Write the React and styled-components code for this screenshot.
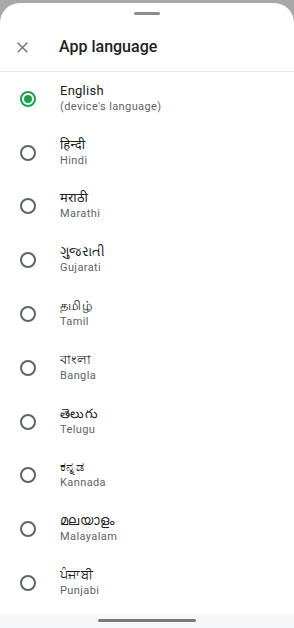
import React, { useState } from "react";
import styled, { createGlobalStyle } from "styled-components";

const GlobalStyle = createGlobalStyle`
  html, body {
    margin: 0;
    padding: 0;
    background: #a8a8a8;
  }
  body {
    font-family: Roboto, "Noto Sans", "DejaVu Sans", sans-serif;
  }
`;

const languages = [
  { id: "en", name: "English", sub: "(device's language)" },
  { id: "hi", name: "हिन्दी", sub: "Hindi" },
  { id: "mr", name: "मराठी", sub: "Marathi" },
  { id: "gu", name: "ગુજરાતી", sub: "Gujarati" },
  { id: "ta", name: "தமிழ்", sub: "Tamil" },
  { id: "bn", name: "বাংলা", sub: "Bangla" },
  { id: "te", name: "తెలుగు", sub: "Telugu" },
  { id: "kn", name: "ಕನ್ನಡ", sub: "Kannada" },
  { id: "ml", name: "മലയാളം", sub: "Malayalam" },
  { id: "pa", name: "ਪੰਜਾਬੀ", sub: "Punjabi" },
];

function LanguageRow({ lang, selected, onSelect }) {
  return (
    <Row onClick={() => onSelect(lang.id)}>
      <Radio checked={selected}>{selected && <RadioDot />}</Radio>
      <Labels>
        <Name>{lang.name}</Name>
        <Sub>{lang.sub}</Sub>
      </Labels>
    </Row>
  );
}

export default function App() {
  const [current, setCurrent] = useState("en");

  return (
    <>
      <GlobalStyle />
      <Screen>
        <Sheet>
          <Grabber />
          <Header>
            <CloseButton aria-label="Close">
              <svg width="11" height="11" viewBox="0 0 11 11">
                <path
                  d="M0.7 0.7 L10.3 10.3 M10.3 0.7 L0.7 10.3"
                  stroke="#6f7378"
                  strokeWidth="1.4"
                  fill="none"
                />
              </svg>
            </CloseButton>
            <Title>App language</Title>
          </Header>
          <List>
            {languages.map((lang) => (
              <LanguageRow
                key={lang.id}
                lang={lang}
                selected={current === lang.id}
                onSelect={setCurrent}
              />
            ))}
          </List>
          <NavBar>
            <NavHandle />
          </NavBar>
        </Sheet>
      </Screen>
    </>
  );
}

const Screen = styled.div`
  height: 628px;
  padding-top: 3px;
  box-sizing: border-box;
  display: flex;
  flex-direction: column;
`;

const Sheet = styled.div`
  flex: 1;
  display: flex;
  flex-direction: column;
  background: #ffffff;
  border-radius: 20px 20px 0 0;
  overflow: hidden;
`;

const Grabber = styled.div`
  align-self: center;
  width: 26px;
  height: 3px;
  margin-top: 9px;
  border-radius: 2px;
  background: #8c8c8c;
`;

const Header = styled.div`
  display: flex;
  align-items: center;
  padding: 22px 0 14px 17px;
  border-bottom: 1px solid #e8eaed;
`;

const CloseButton = styled.button`
  display: flex;
  padding: 0;
  margin: 0;
  border: none;
  background: transparent;
  cursor: pointer;
`;

const Title = styled.h1`
  margin: 0 0 0 31px;
  font-size: 16px;
  line-height: 20px;
  font-weight: 500;
  color: #202124;
`;

const List = styled.div`
  flex: 1;
  display: flex;
  flex-direction: column;
`;

const Row = styled.div`
  display: flex;
  align-items: center;
  gap: 24px;
  height: 53.8px;
  padding-left: 20px;
  cursor: pointer;
`;

const Radio = styled.span`
  box-sizing: border-box;
  width: 16px;
  height: 16px;
  border-radius: 50%;
  border: 2px solid ${(props) => (props.checked ? "#1e9e4a" : "#5f6368")};
  display: flex;
  align-items: center;
  justify-content: center;
  flex-shrink: 0;
`;

const RadioDot = styled.span`
  width: 8px;
  height: 8px;
  border-radius: 50%;
  background: #1e9e4a;
`;

const Labels = styled.div`
  display: flex;
  flex-direction: column;
`;

const Name = styled.span`
  font-size: 13px;
  line-height: 16px;
  letter-spacing: 0.25px;
  color: #202124;
`;

const Sub = styled.span`
  font-size: 11px;
  line-height: 16px;
  letter-spacing: 0.4px;
  color: #5f6368;
`;

const NavBar = styled.div`
  height: 14px;
  background: #f6f7f9;
  display: flex;
  justify-content: center;
  padding-top: 5px;
  box-sizing: border-box;
`;

const NavHandle = styled.div`
  width: 98px;
  height: 3px;
  border-radius: 2px;
  background: #7a7a7a;
`;
